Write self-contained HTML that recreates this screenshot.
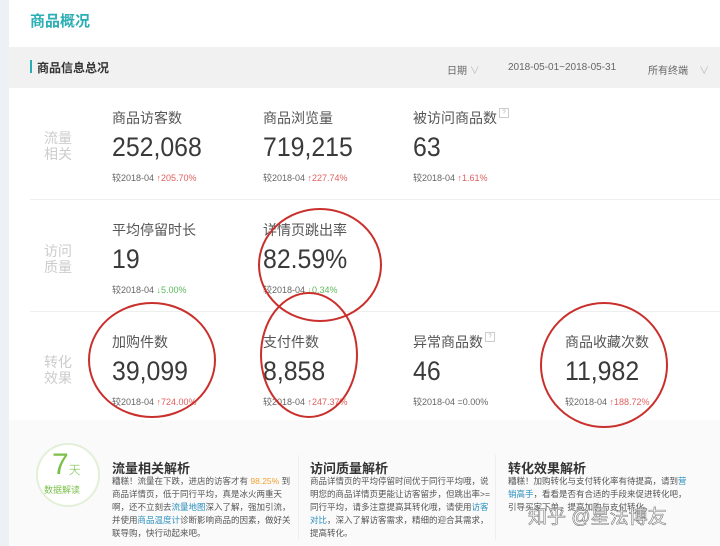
<!DOCTYPE html>
<html><head><meta charset="utf-8"><style>
body{margin:0;width:720px;height:546px;overflow:hidden;background:#fff;font-family:"Liberation Sans","Noto Sans CJK SC",sans-serif;position:relative}
.a{position:absolute;white-space:nowrap}
.t{font-size:14px;color:#555}
.n{font-size:27px;color:#3a3a3a;transform:scaleX(.92);transform-origin:left}
.c{font-size:9px;color:#666}
.up{color:#e0605f}.dn{color:#5cb85c}
.l{font-size:14px;color:#ccc;line-height:16px}
.h{font-size:13px;font-weight:bold;color:#333}
.p{font-size:8.5px;color:#555;line-height:13px;white-space:normal;width:185px}
.q{display:inline-block;width:8px;height:8px;border:1px solid #ccc;font-size:6px;color:#aaa;text-align:center;line-height:8px;vertical-align:top;margin-left:2px}
.lk{color:#2a8fbd}
</style></head><body>
<div class="a" style="left:0;top:0;width:9px;height:546px;background:#edf1f5"></div>
<div class="a" style="left:30px;top:10px;font-size:15px;color:#2aaeb4;font-weight:bold">商品概况</div>
<div class="a" style="left:9px;top:47px;width:711px;height:41px;background:#f1f1f1"></div>
<div class="a" style="left:30px;top:60px;width:2px;height:13px;background:#2aaeb4"></div>
<div class="a" style="left:37px;top:59px;font-size:12px;font-weight:bold;color:#333">商品信息总况</div>
<div class="a" style="left:447px;top:62px;font-size:10px;color:#666">日期 <span style="color:#bbb">∨</span></div>
<div class="a" style="left:508px;top:62px;font-size:10px;color:#666">2018-05-01~2018-05-31</div>
<div class="a" style="left:648px;top:62px;font-size:10px;color:#666">所有终端 &nbsp;&nbsp;&nbsp;<span style="color:#bbb">∨</span></div>

<div class="a l" style="left:44px;top:130px">流量<br>相关</div>
<div class="a t" style="left:112px;top:108px">商品访客数</div>
<div class="a n" style="left:112px;top:132px">252,068</div>
<div class="a c" style="left:112px;top:171px">较2018-04 <span class="up">↑205.70%</span></div>
<div class="a t" style="left:263px;top:108px">商品浏览量</div>
<div class="a n" style="left:263px;top:132px">719,215</div>
<div class="a c" style="left:263px;top:171px">较2018-04 <span class="up">↑227.74%</span></div>
<div class="a t" style="left:413px;top:108px">被访问商品数<span class="q">?</span></div>
<div class="a n" style="left:413px;top:132px">63</div>
<div class="a c" style="left:413px;top:171px">较2018-04 <span class="up">↑1.61%</span></div>
<div class="a" style="left:30px;top:199px;width:690px;height:1px;background:#eee"></div>

<div class="a l" style="left:44px;top:243px">访问<br>质量</div>
<div class="a t" style="left:112px;top:220px">平均停留时长</div>
<div class="a n" style="left:112px;top:244px">19</div>
<div class="a c" style="left:112px;top:283px">较2018-04 <span class="dn">↓5.00%</span></div>
<div class="a t" style="left:263px;top:220px">详情页跳出率</div>
<div class="a n" style="left:263px;top:244px">82.59%</div>
<div class="a c" style="left:263px;top:283px">较2018-04 <span class="dn">↓0.34%</span></div>
<div class="a" style="left:30px;top:311px;width:690px;height:1px;background:#eee"></div>

<div class="a l" style="left:44px;top:354px">转化<br>效果</div>
<div class="a t" style="left:112px;top:332px">加购件数</div>
<div class="a n" style="left:112px;top:356px">39,099</div>
<div class="a c" style="left:112px;top:395px">较2018-04 <span class="up">↑724.00%</span></div>
<div class="a t" style="left:263px;top:332px">支付件数</div>
<div class="a n" style="left:263px;top:356px">8,858</div>
<div class="a c" style="left:263px;top:395px">较2018-04 <span class="up">↑247.37%</span></div>
<div class="a t" style="left:413px;top:332px">异常商品数<span class="q">?</span></div>
<div class="a n" style="left:413px;top:356px">46</div>
<div class="a c" style="left:413px;top:395px">较2018-04 <span>=0.00%</span></div>
<div class="a t" style="left:565px;top:332px">商品收藏次数</div>
<div class="a n" style="left:565px;top:356px">11,982</div>
<div class="a c" style="left:565px;top:395px">较2018-04 <span class="up">↑188.72%</span></div>

<div class="a" style="left:9px;top:420px;width:711px;height:126px;background:#fafafa"></div>
<div class="a" style="left:36px;top:443px;width:60px;height:60px;border-radius:50%;border:2px solid #e3f0d8;background:#fff"></div>
<div class="a" style="left:52px;top:448px;font-size:30px;color:#7cc04b;font-weight:300">7<span style="font-size:12px">天</span></div>
<div class="a" style="left:44px;top:483px;font-size:9px;color:#7cc04b">数据解读</div>
<div class="a h" style="left:112px;top:458px">流量相关解析</div>
<div class="a p" style="left:112px;top:475px">糟糕！流量在下跌，进店的访客才有 <span style="color:#f0a030">98.25%</span> 到商品详情页，低于同行平均，真是冰火两重天啊，还不立刻去<span class="lk">流量地图</span>深入了解，强加引流，并使用<span class="lk">商品温度计</span>诊断影响商品的因素，做好关联导购，快行动起来吧。</div>
<div class="a" style="left:298px;top:455px;width:1px;height:85px;background:#eee"></div>
<div class="a h" style="left:310px;top:458px">访问质量解析</div>
<div class="a p" style="left:310px;top:475px">商品详情页的平均停留时间优于同行平均哦，说明您的商品详情页更能让访客留步，但跳出率&gt;=同行平均，请多注意提高其转化哦，请使用<span class="lk">访客对比</span>，深入了解访客需求，精细的迎合其需求，提高转化。</div>
<div class="a" style="left:495px;top:455px;width:1px;height:85px;background:#eee"></div>
<div class="a h" style="left:508px;top:458px">转化效果解析</div>
<div class="a p" style="left:508px;top:475px">糟糕！加购转化与支付转化率有待提高，请到<span class="lk">营销高手</span>，看看是否有合适的手段来促进转化吧，引导买家下单，提高加购与支付转化。</div>
<div class="a" style="left:528px;top:502px;font-size:19px;color:rgba(255,255,255,.85);-webkit-text-stroke:0.6px #777">知乎 @星法博友</div>

<svg class="a" style="left:0;top:0" width="720" height="546">
<g fill="none" stroke="#c9302c" stroke-width="2">
<ellipse cx="320" cy="265" rx="61" ry="56"/>
<ellipse cx="152" cy="360" rx="63" ry="57"/>
<ellipse cx="309" cy="355" rx="48" ry="62"/>
<ellipse cx="604" cy="365" rx="63" ry="62"/>
</g></svg>
</body></html>
